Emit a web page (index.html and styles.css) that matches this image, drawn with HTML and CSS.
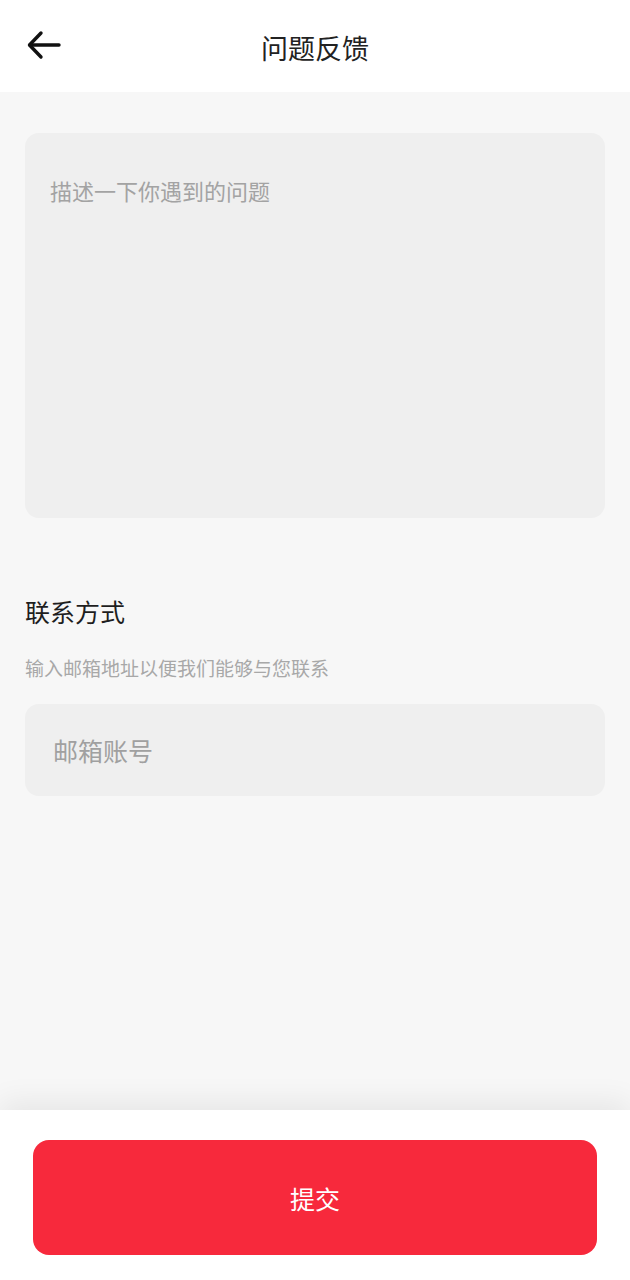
FILE: index.html
```html
<!DOCTYPE html>
<html lang="zh-CN">
<head>
<meta charset="utf-8">
<title>问题反馈</title>
<link rel="stylesheet" href="styles.css">
</head>
<body>
<div class="page">
  <header class="header">
    <div class="back">
      <svg width="34" height="30" viewBox="0 0 34 30" fill="none" stroke="#111" stroke-width="3.4" stroke-linecap="round" stroke-linejoin="round">
        <path d="M32 15H3"/>
        <path d="M14 3L2.5 15L14 27"/>
      </svg>
    </div>
    <h1 class="title">问题反馈</h1>
    <div></div>
  </header>
  <main class="main">
    <div class="textarea"><span class="ph ph-desc">描述一下你遇到的问题</span></div>
    <h2 class="contact-title">联系方式</h2>
    <p class="contact-sub">输入邮箱地址以便我们能够与您联系</p>
    <div class="input"><span class="ph ph-mail">邮箱账号</span></div>
  </main>
  <footer class="footer">
    <button class="submit">提交</button>
  </footer>
</div>
</body>
</html>
```
FILE: styles.css
```css
* { box-sizing: border-box; }
html, body { margin: 0; padding: 0; }
body {
  font-family: "Noto Sans CJK SC", "Noto Sans", sans-serif;
  background: #f7f7f7;
}
.page {
  display: flex;
  flex-direction: column;
  height: 1280px;
}
.header {
  height: 92px;
  background: #fff;
  display: grid;
  grid-template-columns: 1fr auto 1fr;
  align-items: center;
  flex: none;
}
.back {
  padding-left: 27px;
  display: flex;
  align-items: center;
  margin-top: -2px;
}
.title {
  margin: 0;
  font-size: 27px;
  font-weight: 400;
  color: #222;
  line-height: 32px;
  margin-top: 4px;
}
.main {
  flex: 1;
  background: #f7f7f7;
  padding: 41px 25px 0;
}
.textarea {
  height: 385px;
  border-radius: 14px;
  background: #efefef;
  padding: 44px 25px 0;
}
.ph {
  color: #a3a3a3;
  display: block;
}
.ph-desc {
  font-size: 22px;
  line-height: 26px;
}
.contact-title {
  margin: 78px 0 0;
  font-size: 25px;
  line-height: 30px;
  font-weight: 400;
  color: #1e1e1e;
}
.contact-sub {
  margin: 30px 0 0;
  font-size: 19px;
  line-height: 24px;
  color: #a8a8a8;
}
.input {
  margin-top: 24px;
  height: 92px;
  border-radius: 14px;
  background: #efefef;
  display: flex;
  align-items: center;
  padding-left: 28px;
}
.ph-mail {
  font-size: 25px;
  line-height: 30px;
  color: #a0a0a0;
}
.footer {
  flex: none;
  height: 170px;
  background: #fff;
  box-shadow: 0 -8px 28px rgba(0, 0, 0, 0.07);
  padding: 30px 33px 0;
  position: relative;
}
.submit {
  width: 100%;
  height: 115px;
  border: none;
  border-radius: 16px;
  background: #f7293c;
  color: #fff;
  font-family: inherit;
  font-size: 25px;
  display: flex;
  align-items: center;
  justify-content: center;
}
```
